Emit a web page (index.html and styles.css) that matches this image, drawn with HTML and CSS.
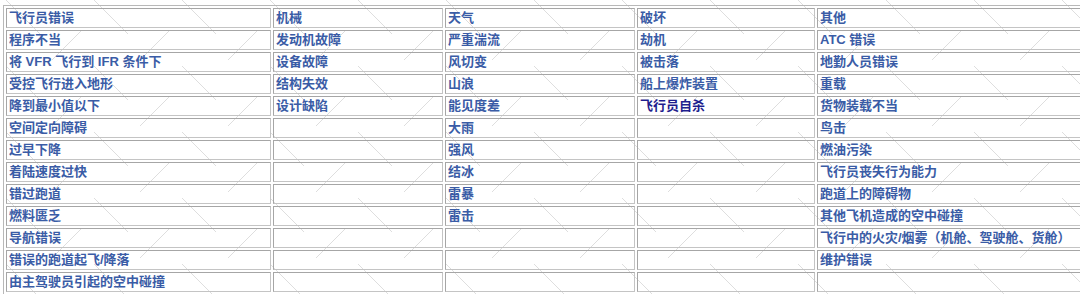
FILE: index.html
```html
<!DOCTYPE html>
<html lang="zh-CN">
<head>
<meta charset="utf-8">
<title>航空事故原因</title>
<link rel="stylesheet" href="styles.css">
</head>
<body>
<table class="causes">
  <colgroup>
    <col class="c1"><col class="c2"><col class="c3"><col class="c4"><col class="c5">
  </colgroup>
  <tbody>
    <tr><td>飞行员错误</td><td>机械</td><td>天气</td><td>破坏</td><td>其他</td></tr>
    <tr><td>程序不当</td><td>发动机故障</td><td>严重湍流</td><td>劫机</td><td>ATC 错误</td></tr>
    <tr><td>将 VFR 飞行到 IFR 条件下</td><td>设备故障</td><td>风切变</td><td>被击落</td><td>地勤人员错误</td></tr>
    <tr><td>受控飞行进入地形</td><td>结构失效</td><td>山浪</td><td>船上爆炸装置</td><td>重载</td></tr>
    <tr><td>降到最小值以下</td><td>设计缺陷</td><td>能见度差</td><td class="visited">飞行员自杀</td><td>货物装载不当</td></tr>
    <tr><td>空间定向障碍</td><td></td><td>大雨</td><td></td><td>鸟击</td></tr>
    <tr><td>过早下降</td><td></td><td>强风</td><td></td><td>燃油污染</td></tr>
    <tr><td>着陆速度过快</td><td></td><td>结冰</td><td></td><td>飞行员丧失行为能力</td></tr>
    <tr><td>错过跑道</td><td></td><td>雷暴</td><td></td><td>跑道上的障碍物</td></tr>
    <tr><td>燃料匮乏</td><td></td><td>雷击</td><td></td><td>其他飞机造成的空中碰撞</td></tr>
    <tr><td>导航错误</td><td></td><td></td><td></td><td>飞行中的火灾/烟雾（机舱、驾驶舱、货舱）</td></tr>
    <tr><td>错误的跑道起飞/降落</td><td></td><td></td><td></td><td>维护错误</td></tr>
    <tr><td>由主驾驶员引起的空中碰撞</td><td></td><td></td><td></td><td></td></tr>
  </tbody>
</table>
</body>
</html>
```
FILE: styles.css
```css
html, body {
  margin: 0;
  padding: 0;
  overflow: hidden;
}
body {
  width: 1080px;
  height: 294px;
  background-color: #ffffff;
  background-image: url("data:image/svg+xml;utf8,<svg xmlns='http://www.w3.org/2000/svg' width='88' height='66'><g stroke='%23dedede' stroke-width='1' fill='none'><path d='M6 0 L40 34'/><path d='M52 60 L82 30'/></g></svg>");
  background-repeat: repeat;
  padding: 5px 0 0 3px;
  box-sizing: border-box;
}
.causes {
  border-collapse: separate;
  border-spacing: 2px;
  border: 1px solid #b8b8b8;
  border-right-color: #9a9a9a;
  border-bottom-color: #9a9a9a;
  table-layout: fixed;
  width: 1130px;
  font-family: "Liberation Sans", "Noto Sans CJK SC", sans-serif;
  font-size: 13px;
  font-weight: bold;
  color: #3a5ca6;
}
.c1 { width: 265px; }
.c2 { width: 170px; }
.c3 { width: 190px; }
.c4 { width: 178px; }
.c5 { width: 319px; }
.causes td {
  box-sizing: border-box;
  height: 20px;
  padding: 0 2px;
  line-height: 18px;
  border: 1px solid #a6a6a6;
  border-right-color: #c4c4c4;
  border-bottom-color: #c4c4c4;
  white-space: nowrap;
  overflow: hidden;
  vertical-align: middle;
}
.causes td.visited {
  color: #1e1e8e;
}
```
